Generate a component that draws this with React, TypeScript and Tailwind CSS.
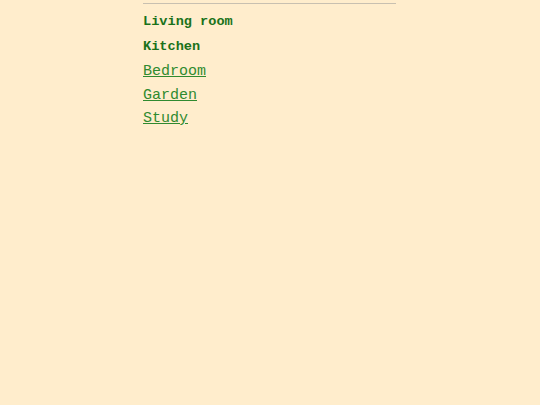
export default function App() {
  const rooms = [
    { name: "Living room", active: true },
    { name: "Kitchen", active: true },
    { name: "Bedroom", active: false },
    { name: "Garden", active: false },
    { name: "Study", active: false },
  ]

  return (
    <div className="min-h-[405px] w-full bg-[#ffedcc] font-['Liberation_Mono',monospace]">
      <div className="ml-[143px] w-[253px]">
        <div className="pt-[3px] border-b border-[#c8c0b0]"></div>
        <ul className="pt-[9px]">
          {rooms.map((room) =>
            room.active ? (
              <li key={room.name} className="h-[25px] text-[13.6px] font-bold leading-[18px] text-[#1a721a]">
                {room.name}
              </li>
            ) : (
              <li key={room.name} className="h-[23.5px] text-[15px] leading-[17px]">
                <a href="#" className="text-[#2f8a2f] underline">
                  {room.name}
                </a>
              </li>
            ),
          )}
        </ul>
      </div>
    </div>
  )
}
